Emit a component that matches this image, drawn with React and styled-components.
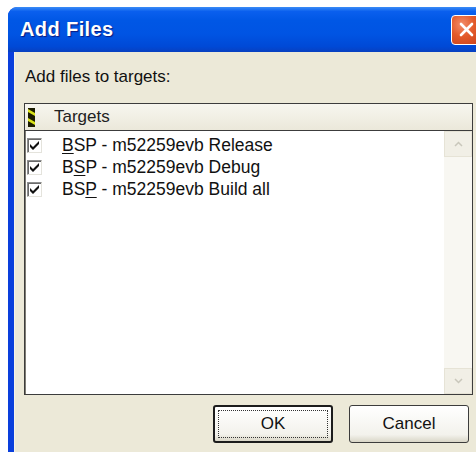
import React from 'react';
import styled, { createGlobalStyle } from 'styled-components';

const GlobalStyle = createGlobalStyle`
  html, body {
    margin: 0;
    padding: 0;
    background: #ffffff;
    overflow: hidden;
  }
`;

const Page = styled.div`
  width: 476px;
  height: 456px;
  padding: 7px 0 0 8px;
  box-sizing: border-box;
  overflow: hidden;
  font-family: "Liberation Sans", Arial, sans-serif;
`;

const Window = styled.div`
  width: 490px;
  border-radius: 9px 9px 0 0;
  background: #0a3fdc;
  overflow: hidden;
`;

const TitleBar = styled.div`
  height: 45px;
  display: flex;
  align-items: center;
  padding: 0 0 0 12px;
  background: linear-gradient(
    to bottom,
    #3a8cf6 0%,
    #0a5fee 10%,
    #0057e5 30%,
    #0054e3 60%,
    #0049d6 88%,
    #0840c0 100%
  );
`;

const Title = styled.div`
  flex: 1;
  color: #ffffff;
  font-weight: bold;
  font-size: 20px;
  letter-spacing: 0.4px;
  text-shadow: 1px 1px 1px #0a1a80;
`;

const CloseButton = styled.div`
  width: 31px;
  height: 30px;
  margin-right: 16px;
  box-sizing: border-box;
  border: 1px solid #ffffff;
  border-radius: 4px;
  background: radial-gradient(circle at 35% 30%, #f28d6b 0%, #e35a2a 45%, #c8401a 100%);
  display: flex;
  align-items: center;
  justify-content: center;
`;

const Body = styled.div`
  height: 400px;
  margin-left: 6px;
  background: #ece9d8;
  border-left: 1px solid #f4f2ea;
  box-sizing: border-box;
  padding: 14px 0 0 9px;
  display: flex;
  flex-direction: column;
`;

const Label = styled.div`
  font-size: 17px;
  line-height: 22px;
  color: #111;
  padding-left: 1px;
`;

const ListBox = styled.div`
  width: 449px;
  height: 292px;
  margin-top: 15px;
  box-sizing: border-box;
  border: 1px solid #3c3c3c;
  box-shadow: inset 1px 1px 0 #7f7d74;
  background: #ffffff;
  display: flex;
  flex-direction: column;
`;

const Header = styled.div`
  height: 26px;
  flex: none;
  display: flex;
  align-items: center;
  gap: 19px;
  padding-left: 3px;
  background: linear-gradient(to bottom, #f7f6ef, #ebe8da);
  border-bottom: 1px solid #3c3c3c;
  font-size: 17px;
  color: #222;
`;

const ListArea = styled.div`
  flex: 1;
  display: flex;
  min-height: 0;
`;

const Rows = styled.div`
  flex: 1;
  padding-top: 3px;
`;

const Row = styled.div`
  height: 22px;
  display: flex;
  align-items: center;
  gap: 20px;
  padding-left: 2px;
  font-size: 17.5px;
  color: #111;
`;

const CheckBox = styled.div`
  width: 15px;
  height: 15px;
  flex: none;
  box-sizing: border-box;
  border: 1px solid #8e8f8f;
  border-right-color: #e4e3dc;
  border-bottom-color: #e4e3dc;
  box-shadow: inset 1px 1px 0 #6a6a6a;
  background: #ffffff;
  display: flex;
  align-items: center;
  justify-content: center;
`;

const Key = styled.span`
  text-decoration: underline;
  text-underline-offset: 2px;
`;

const ScrollBar = styled.div`
  width: 28px;
  display: flex;
  flex-direction: column;
  justify-content: space-between;
  background: #f8f7f2;
`;

const ScrollArrow = styled.div`
  height: 26px;
  box-sizing: border-box;
  background: #f1efe6;
  border: 1px solid #e6e3d6;
  display: flex;
  align-items: center;
  justify-content: center;
`;

const Buttons = styled.div`
  width: 449px;
  margin-top: 10px;
  display: flex;
  justify-content: flex-end;
  gap: 16px;
  padding-right: 4px;
  box-sizing: border-box;
`;

const Button = styled.div`
  width: 120px;
  height: 38px;
  box-sizing: border-box;
  border: ${p => (p.$default ? '2px solid #1c1c1c' : '1px solid #3c3c3c')};
  border-radius: 3px;
  background: linear-gradient(to bottom, #ffffff, #f3f2ec 80%, #d9d6c7);
  display: flex;
  align-items: center;
  justify-content: center;
  font-size: 17px;
  color: #111;
  padding: 3px;
`;

const Focus = styled.div`
  flex: 1;
  align-self: stretch;
  border: 1px dotted #333;
  display: flex;
  align-items: center;
  justify-content: center;
`;

const Check = () => (
  <svg width="11" height="10" viewBox="0 0 11 10">
    <path d="M1 4 L4 7 L10 1 L10 4 L4 10 L1 7 Z" fill="#111" />
  </svg>
);

const StateIcon = () => (
  <svg width="7" height="19" viewBox="0 0 7 19">
    <rect x="0" y="0" width="7" height="19" fill="#1b1b00" />
    <path d="M0 1 L7 5 L7 8 L0 4 Z M0 10 L7 14 L7 17 L0 13 Z" fill="#d9e21a" />
  </svg>
);

const targets = [
  { pre: '', key: 'B', post: 'SP - m52259evb Release' },
  { pre: 'B', key: 'S', post: 'P - m52259evb Debug' },
  { pre: 'BS', key: 'P', post: ' - m52259evb Build all' },
];

export default function App() {
  return (
    <Page>
      <GlobalStyle />
      <Window>
        <TitleBar>
          <Title>Add Files</Title>
          <CloseButton>
            <svg width="17" height="17" viewBox="0 0 17 17">
              <path d="M3 3 L14 14 M14 3 L3 14" stroke="#ffffff" strokeWidth="2.6" strokeLinecap="round" />
            </svg>
          </CloseButton>
        </TitleBar>
        <Body>
          <Label>Add files to targets:</Label>
          <ListBox>
            <Header>
              <StateIcon />
              <span>Targets</span>
            </Header>
            <ListArea>
              <Rows>
                {targets.map(t => (
                  <Row key={t.key}>
                    <CheckBox>
                      <Check />
                    </CheckBox>
                    <span>
                      {t.pre}
                      <Key>{t.key}</Key>
                      {t.post}
                    </span>
                  </Row>
                ))}
              </Rows>
              <ScrollBar>
                <ScrollArrow>
                  <svg width="9" height="6" viewBox="0 0 9 6">
                    <path d="M1 5 L4.5 1.5 L8 5" stroke="#c9c7bb" strokeWidth="1.5" fill="none" />
                  </svg>
                </ScrollArrow>
                <ScrollArrow>
                  <svg width="9" height="6" viewBox="0 0 9 6">
                    <path d="M1 1 L4.5 4.5 L8 1" stroke="#c9c7bb" strokeWidth="1.5" fill="none" />
                  </svg>
                </ScrollArrow>
              </ScrollBar>
            </ListArea>
          </ListBox>
          <Buttons>
            <Button $default>
              <Focus>OK</Focus>
            </Button>
            <Button>Cancel</Button>
          </Buttons>
        </Body>
      </Window>
    </Page>
  );
}
